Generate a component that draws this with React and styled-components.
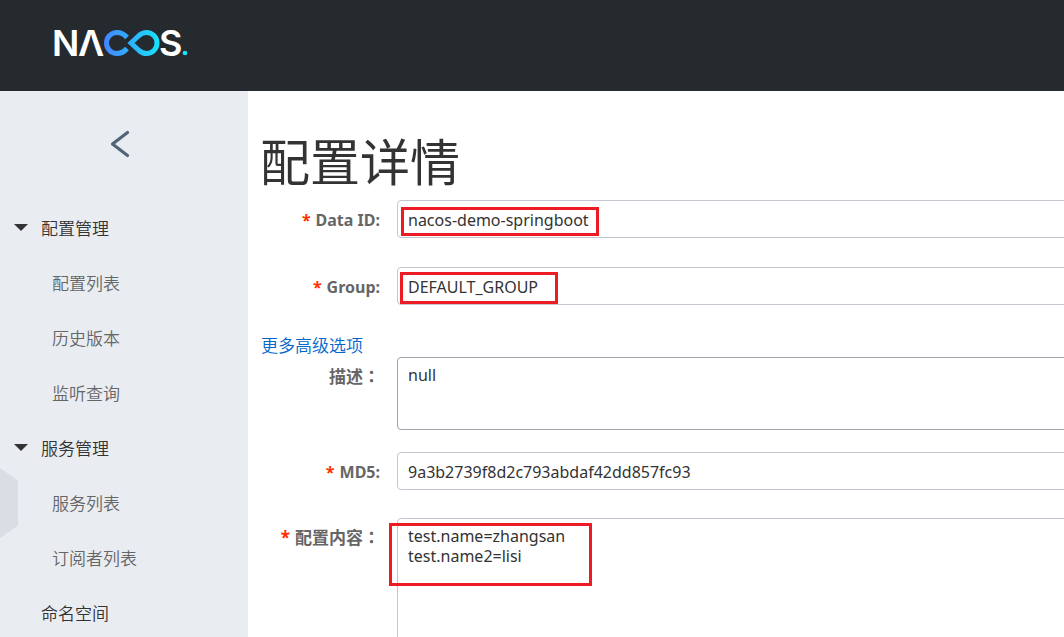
import React, { useState } from 'react'
import styled, { createGlobalStyle } from 'styled-components'

const GlobalStyle = createGlobalStyle`
    * {
        box-sizing: border-box;
    }
    body {
        margin: 0;
        color: #333;
        background: #fff;
        font-family: "Noto Sans", "Noto Sans CJK SC", sans-serif;
        font-size: 17px;
    }
    input, textarea, button {
        font-family: inherit;
    }
`

const Page = styled.div`
    display: flex;
    flex-direction: column;
    height: 100vh;
    overflow: hidden;
`

const Header = styled.header`
    flex: none;
    display: flex;
    align-items: center;
    height: 91px;
    padding: 0 52px 5px;
    background: #252a2f;
`

const HomeLink = styled.a`
    display: flex;
`

const LogoText = styled.text`
    font-family: Inter, sans-serif;
    font-size: 36px;
    font-weight: 600;
    fill: #fff;
`

const Body = styled.div`
    flex: 1;
    display: flex;
    min-height: 0;
`

const Sidebar = styled.aside`
    position: relative;
    flex: none;
    width: 248px;
    overflow: hidden;
    background: #e9edf2;
`

const CollapseButton = styled.button`
    display: flex;
    align-items: center;
    justify-content: center;
    width: 240px;
    height: 110px;
    padding: 0 0 4px;
    border: 0;
    background: none;
    cursor: pointer;
`

const Menu = styled.ul`
    margin: 0;
    padding: 0;
    list-style: none;
`

const GroupButton = styled.button`
    display: flex;
    align-items: center;
    gap: 13px;
    width: 100%;
    height: 55px;
    padding: 0 14px 2px;
    border: 0;
    background: none;
    color: #333;
    font-size: 17px;
    font-weight: 350;
    cursor: pointer;
`

const Caret = styled.span`
    margin-bottom: 1px;
    border: 7px solid transparent;
    border-top-color: #333;
    border-bottom: 0;
`

const MenuLink = styled.a`
    display: block;
    height: 55px;
    padding-left: ${props => props.$top ? '41px' : '52px'};
    color: ${props => props.$top ? '#333' : '#666'};
    font-weight: 350;
    line-height: 55px;
    text-decoration: none;
`

// Handle of the drawer, on the left edge of the sidebar
const DrawerHandle = styled.span`
    position: absolute;
    top: 377px;
    left: 0;
    width: 18px;
    height: 70px;
    background: #d9dee4;
    clip-path: polygon(0 0, 100% 18%, 100% 82%, 0 100%);
`

const Main = styled.main`
    flex: 1;
    min-width: 0;
    padding: 36px 0 0 12px;
    overflow: hidden;
`

const Title = styled.h1`
    margin: 0 0 3px;
    font-size: 50px;
    font-weight: 400;
    line-height: 70px;
`

// The form is wider than the pane, its right side is cut off
const Form = styled.form`
    width: 125%;
`

const Row = styled.div`
    display: grid;
    grid-template-columns: 120px 1fr;
    column-gap: 17px;
    margin-bottom: ${props => props.$gap}px;
`

const Label = styled.label`
    color: #666;
    font-size: 16px;
    font-weight: 700;
    height: 38px;
    line-height: 40px;
    text-align: right;
    white-space: nowrap;

    &:lang(zh) {
        font-size: 17px;
    }
`

const Required = styled.span`
    margin-right: 5px;
    color: #ff3000;
`

// TC faces put the full-width colon in the middle of its cell
const Colon = styled.span`
    font-family: "Noto Sans CJK TC", sans-serif;
    line-height: 1;
`

const Control = styled.div`
    position: relative;
    display: flex;
`

const Input = styled.input`
    width: 100%;
    height: 38px;
    padding: 1px 10px 0;
    border: 1px solid #c4c6cf;
    border-radius: 4px;
    outline: 0;
    background: #fff;
    color: #333;
    font-size: 16px;
`

const TextArea = styled.textarea`
    width: 100%;
    height: ${props => props.$tall ? '400px' : '73px'};
    padding: 7px 10px;
    border: 1px solid ${props => props.$tall ? '#c4c6cf' : '#a0a2ad'};
    border-radius: 4px;
    outline: 0;
    background: #fff;
    color: #333;
    font-size: 16px;
    line-height: 20px;
    resize: none;
`

const Highlight = styled.span`
    position: absolute;
    top: ${props => props.$top}px;
    left: ${props => props.$left}px;
    width: ${props => props.$width}px;
    height: ${props => props.$height}px;
    border: 3px solid #ed1c24;
    pointer-events: none;
`

const MoreLink = styled.a`
    display: block;
    width: max-content;
    height: 23px;
    padding-left: 1px;
    color: #06c;
    font-weight: 350;
    line-height: 23px;
    text-decoration: none;
`

const groups = [
    { name: '配置管理', items: ['配置列表', '历史版本', '监听查询'] },
    { name: '服务管理', items: ['服务列表', '订阅者列表'] },
]

const Logo = () => (
    <svg width="140" height="56" viewBox="0 -12 140 56" role="img" aria-label="NACOS">
        <defs>
            <linearGradient id="loop" gradientUnits="userSpaceOnUse" x1="52" y1="0" x2="108" y2="0">
                <stop offset="0" stopColor="#4484ff" />
                <stop offset="1" stopColor="#16e4fa" />
            </linearGradient>
        </defs>
        <LogoText x="0" y="29">N</LogoText>
        <LogoText x="26" y="29">Λ</LogoText>
        <g fill="none" stroke="url(#loop)" strokeWidth="5">
            <path d="M75 10.500C72 7 69 5.500 65 5.500A10.500 10.500 0 0 0 65 26.500C69 26.500 72 25 75 21.500" />
            <path d="M79 16L87 8.500C89.500 6.300 92 5.500 94.500 5.500A10.500 10.500 0 0 1 94.500 26.500C92 26.500 89.500 25.700 87 23.500Z" />
        </g>
        <LogoText x="107" y="29">S</LogoText>
        <circle cx="133" cy="26" r="2.300" fill="#16e4fa" />
    </svg>
)

const Field = ({ id, label, required, zh, gap, children }) => (
    <Row $gap={gap}>
        <Label htmlFor={id} lang={zh ? 'zh' : 'en'}>
            {required && <Required>*</Required>}
            {label}
            {zh ? <Colon lang="zh-TW">：</Colon> : ':'}
        </Label>
        <Control>{children}</Control>
    </Row>
)

const App = () => {

    const [closed, setClosed] = useState([]);

    /**
     * Opens or closes a group of the side menu
     */
    const toggleGroup = (name) => {
        setClosed(closed.includes(name) ? closed.filter(n => n !== name) : [...closed, name]);
    }

    return (
        <Page>
            <GlobalStyle/>
            <Header>
                <HomeLink href="#"><Logo/></HomeLink>
            </Header>
            <Body>
                <Sidebar>
                    <CollapseButton type="button" aria-label="Back">
                        <svg width="20" height="28" viewBox="0 0 20 28" fill="none" stroke="#546478" strokeWidth="3.200" strokeLinecap="round" strokeLinejoin="round">
                            <path d="M17.500 2.500L2.500 14L17.500 25.500" />
                        </svg>
                    </CollapseButton>
                    <Menu>
                        {groups.map(group => (
                            <li key={group.name}>
                                <GroupButton type="button" onClick={() => toggleGroup(group.name)}>
                                    <Caret/>
                                    {group.name}
                                </GroupButton>
                                {!closed.includes(group.name) && (
                                    <Menu>
                                        {group.items.map(item => (
                                            <li key={item}><MenuLink href="#">{item}</MenuLink></li>
                                        ))}
                                    </Menu>
                                )}
                            </li>
                        ))}
                        <li><MenuLink href="#" $top>命名空间</MenuLink></li>
                    </Menu>
                    <DrawerHandle/>
                </Sidebar>
                <Main>
                    <Title>配置详情</Title>
                    <Form>
                        <Field id="dataId" label="Data ID" required gap={29}>
                            <Input id="dataId" defaultValue="nacos-demo-springboot" readOnly />
                            <Highlight $top={7} $left={4} $width={198} $height={29} />
                        </Field>
                        <Field id="group" label="Group" required gap={29}>
                            <Input id="group" defaultValue="DEFAULT_GROUP" readOnly />
                            <Highlight $top={5} $left={3} $width={158} $height={32} />
                        </Field>
                        <MoreLink href="#">更多高级选项</MoreLink>
                        <Field id="desc" label="描述" zh gap={22}>
                            <TextArea id="desc" defaultValue="null" readOnly />
                        </Field>
                        <Field id="md5" label="MD5" required gap={28}>
                            <Input id="md5" defaultValue="9a3b2739f8d2c793abdaf42dd857fc93" readOnly />
                        </Field>
                        <Field id="content" label="配置内容" required zh gap={29}>
                            <TextArea id="content" $tall defaultValue={'test.name=zhangsan\ntest.name2=lisi'} readOnly />
                            <Highlight $top={5} $left={-8} $width={203} $height={63} />
                        </Field>
                    </Form>
                </Main>
            </Body>
        </Page>
    )
}

export default App
